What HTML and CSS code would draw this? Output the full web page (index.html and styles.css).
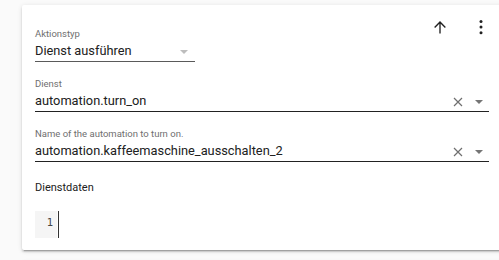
FILE: index.html
```html
<!DOCTYPE html>
<html>
<head>
<meta charset="utf-8">
<link rel="stylesheet" href="styles.css">
</head>
<body>
<div class="card">
  <div class="actions">
    <span class="icon-btn up">
      <svg width="18" height="18" viewBox="0 0 24 24"><path d="M12.9 20.5h-1.8V7.6l-5.6 5.6-1.3-1.3L12 4.1l7.8 7.8-1.3 1.3-5.6-5.6v12.9z" fill="#212121"/></svg>
    </span>
    <span class="icon-btn more">
      <svg width="18" height="18" viewBox="0 0 24 24"><circle cx="12" cy="4.5" r="2" fill="#212121"/><circle cx="12" cy="12" r="2" fill="#212121"/><circle cx="12" cy="19.5" r="2" fill="#212121"/></svg>
    </span>
  </div>
  <div class="field short">
    <div class="label">Aktionstyp</div>
    <div class="value">Dienst ausführen<span class="tri light"></span></div>
  </div>
  <div class="field wide">
    <div class="label">Dienst</div>
    <div class="value">automation.turn_on<span class="trail"><svg class="clear" width="10" height="10" viewBox="0 0 10 10"><path d="M1 1L9 9M9 1L1 9" stroke="#6f6f6f" stroke-width="1.2"/></svg><span class="tri"></span></span></div>
  </div>
  <div class="field wide">
    <div class="label">Name of the automation to turn on.</div>
    <div class="value">automation.kaffeemaschine_ausschalten_2<span class="trail"><svg class="clear" width="10" height="10" viewBox="0 0 10 10"><path d="M1 1L9 9M9 1L1 9" stroke="#6f6f6f" stroke-width="1.2"/></svg><span class="tri"></span></span></div>
  </div>
  <div class="section">Dienstdaten</div>
  <div class="editor">
    <div class="gutter">1</div>
    <div class="cursor"></div>
  </div>
</div>
<div class="card next"></div>
</body>
</html>
```
FILE: styles.css
```css
html, body {
  margin: 0;
  padding: 0;
  background: #fafafa;
  overflow: hidden;
  width: 499px;
  height: 260px;
}
body {
  font-family: Roboto, "Liberation Sans", sans-serif;
  padding-top: 5px;
  box-sizing: border-box;
}
.card {
  position: relative;
  margin-left: 22px;
  width: 490px;
  box-sizing: border-box;
  background: #fff;
  padding: 23px 23px 12px 13px;
  box-shadow: 0 2px 2px 0 rgba(0,0,0,0.14), 0 1px 5px 0 rgba(0,0,0,0.12), 0 3px 1px -2px rgba(0,0,0,0.2);
  display: flex;
  flex-direction: column;
  border-radius: 2px;
}
.card.next {
  margin-top: 12px;
  height: 4px;
  padding: 0;
}
.actions {
  position: absolute;
  top: 13px;
  right: 22px;
  display: flex;
  gap: 23px;
}
.icon-btn {
  width: 18px;
  height: 18px;
  display: flex;
}
.field {
  display: flex;
  flex-direction: column;
  border-bottom: 1px solid #222;
  margin-bottom: 16px;
}
.field.short {
  width: 160px;
  border-bottom-color: #5a5a5a;
}
.label {
  height: 12px;
  line-height: 12px;
  font-size: 9.5px;
  color: #6f6f6f;
}
.value {
  height: 21px;
  line-height: 21px;
  font-size: 12.8px;
  color: #212121;
  display: flex;
  align-items: center;
}
.short .value {
  justify-content: space-between;
}
.tri {
  width: 0;
  height: 0;
  border-left: 4px solid transparent;
  border-right: 4px solid transparent;
  border-top: 4px solid #757575;
}
.tri.light {
  border-top-color: #bdbdbd;
  margin-right: 7px;
  margin-top: 2px;
}
.trail {
  margin-left: auto;
  display: flex;
  align-items: center;
  gap: 12px;
  margin-right: 6px;
  margin-top: 2px;
}
.section {
  margin-top: 2px;
  font-size: 11px;
  color: #212121;
  line-height: 16px;
  height: 16px;
}
.editor {
  margin-top: 15px;
  display: flex;
  height: 27px;
}
.gutter {
  width: 22px;
  background: #f5f5f5;
  font-family: "DejaVu Sans Mono", monospace;
  font-size: 10.5px;
  color: #444;
  text-align: right;
  box-sizing: border-box;
  padding-right: 4px;
  line-height: 22px;
}
.cursor {
  width: 1px;
  margin-left: 1px;
  background: #333;
}
```
